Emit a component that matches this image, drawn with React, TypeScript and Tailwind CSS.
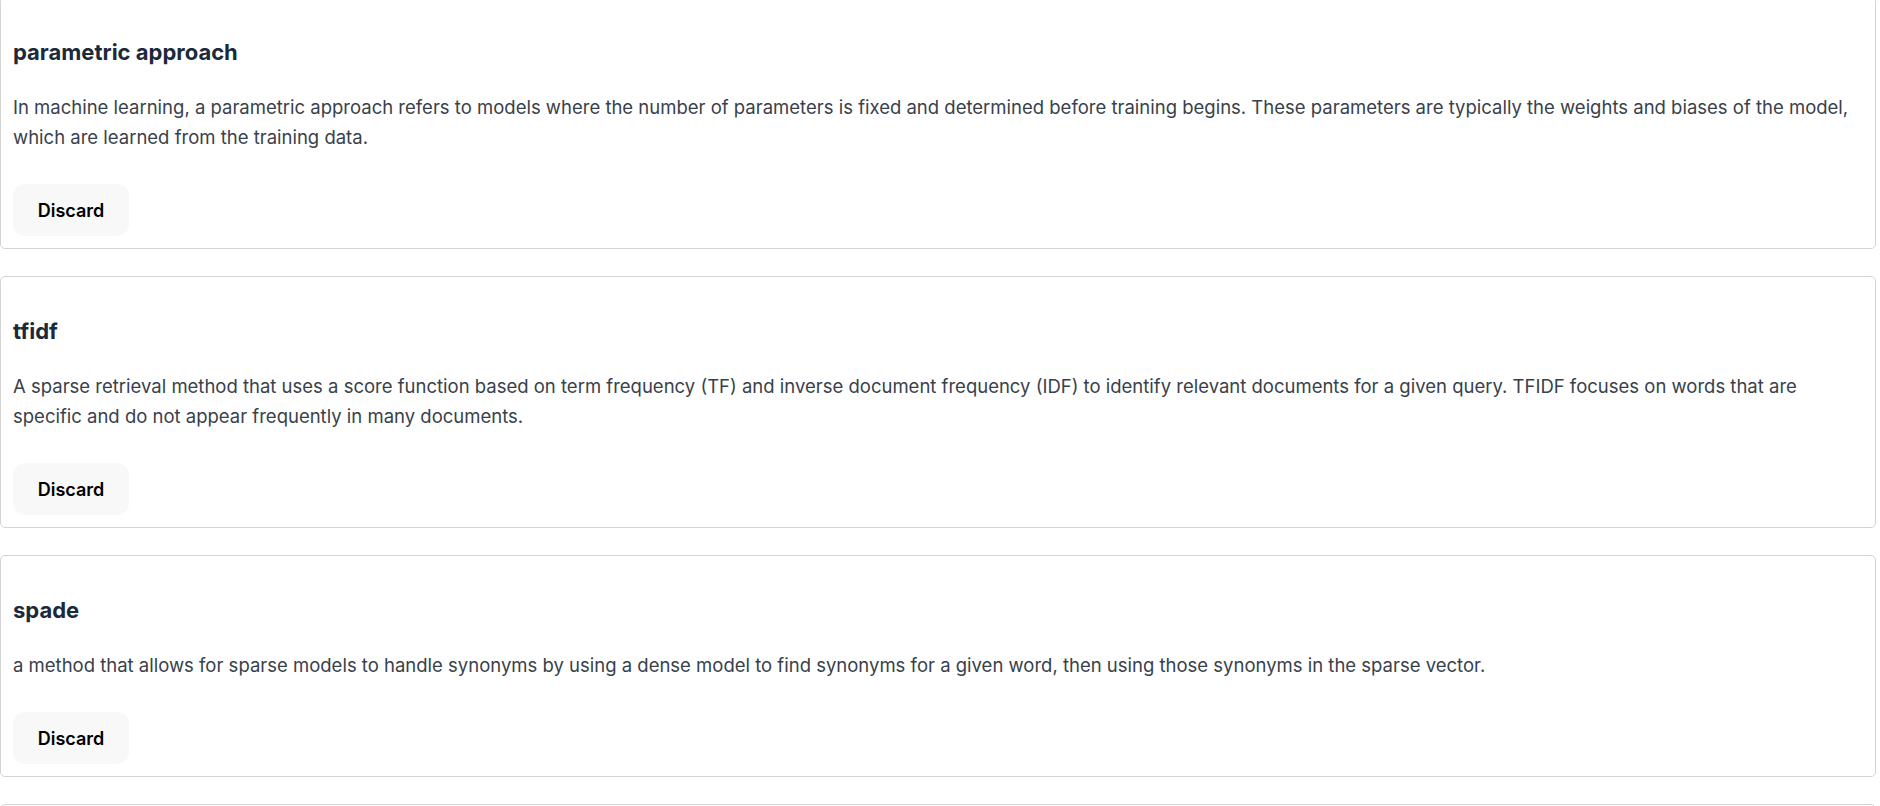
type Term = {
  title: string;
  definition: string;
};

const terms: Term[] = [
  {
    title: "parametric approach",
    definition:
      "In machine learning, a parametric approach refers to models where the number of parameters is fixed and determined before training begins. These parameters are typically the weights and biases of the model, which are learned from the training data.",
  },
  {
    title: "tfidf",
    definition:
      "A sparse retrieval method that uses a score function based on term frequency (TF) and inverse document frequency (IDF) to identify relevant documents for a given query. TFIDF focuses on words that are specific and do not appear frequently in many documents.",
  },
  {
    title: "spade",
    definition:
      "a method that allows for sparse models to handle synonyms by using a dense model to find synonyms for a given word, then using those synonyms in the sparse vector.",
  },
  {
    title: "dense retrieval",
    definition:
      "A retrieval method that encodes queries and documents as dense vectors and ranks documents by their similarity to the query.",
  },
];

const TermCard = ({ term }: { term: Term }) => {
  return (
    <div className="mb-[27px] rounded-[5px] border border-[#d3d3d3] bg-white p-3">
      <h3 className="mt-[26px] mb-[24px] text-[22px] font-bold leading-[32px] text-[#1b2a3a]">
        {term.title}
      </h3>
      <p className="text-[18.5px] leading-[30px] text-[#38414b]">{term.definition}</p>
      <button className="mt-[32px] flex h-[52px] w-[116px] items-center justify-center rounded-[12px] bg-[#f8f8f8] text-[18px] font-semibold text-black">
        Discard
      </button>
    </div>
  );
};

export default function App() {
  return (
    <div
      className="h-[806px] w-full overflow-hidden bg-white"
      style={{ fontFamily: 'Inter, "Noto Sans", sans-serif' }}
    >
      <div className="-mt-[3px] w-[1876px]">
        {terms.map((term) => (
          <TermCard key={term.title} term={term} />
        ))}
      </div>
    </div>
  );
}
